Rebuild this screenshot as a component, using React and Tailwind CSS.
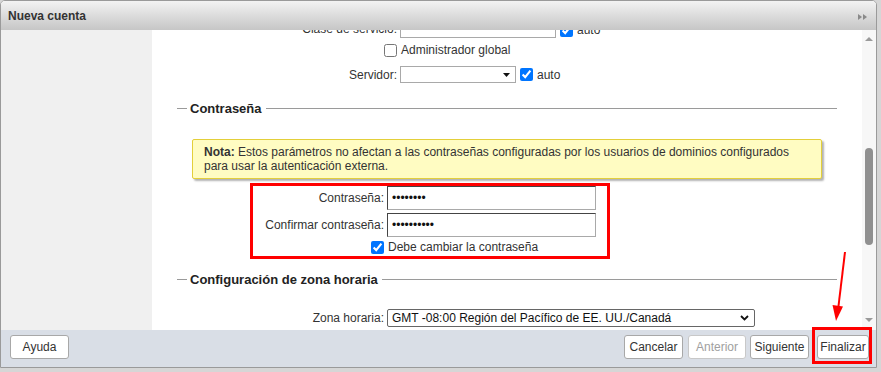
import React from 'react';

function Legend({ title }) {
    return (
        <div className="ml-[25px] flex h-[16px] w-[660px] items-center">
            <div className="h-px w-[10px] bg-[#9a9a9a]" />
            <span className="ml-[3px] mr-[4px] text-[13px] font-bold leading-none text-[#222]">{title}</span>
            <div className="h-px flex-1 bg-[#9a9a9a]" />
        </div>
    );
}

function Check({ checked }) {
    return (
        <input
            type="checkbox"
            defaultChecked={checked}
            className="m-0 h-[13px] w-[13px] shrink-0"
        />
    );
}

function Btn({ children, disabled, className = '' }) {
    return (
        <button
            className={`flex h-[24px] items-center justify-center rounded-[3px] border bg-white text-[12px] ${disabled ? 'border-[#c8c8c8] text-[#a0a0a0]' : 'border-[#a8a8a8] text-[#333]'} ${className}`}
        >
            {children}
        </button>
    );
}

export default function App() {
    return (
        <div className="relative h-[372px] w-[881px] overflow-hidden bg-[#d6d6d6] font-['Liberation_Sans',Arial,sans-serif] text-[12px] text-[#333]">
            <div className="flex h-[368px] w-[877px] flex-col overflow-hidden rounded-t-[5px] border border-[#9a9a9a] bg-white">
                {/* title bar */}
                <div className="flex h-[29px] shrink-0 items-center justify-between bg-gradient-to-b from-[#f3f3f3] to-[#c6c6c6] pl-[7px] pr-[9px]">
                    <span className="text-[12px] font-bold text-[#333]">Nueva cuenta</span>
                    <svg width="9" height="6" viewBox="0 0 9 6" className="mt-[3px]">
                        <polygon points="0,0 4,3 0,6" fill="#8a8a8a" />
                        <polygon points="5,0 9,3 5,6" fill="#8a8a8a" />
                    </svg>
                </div>

                {/* body */}
                <div className="flex h-[300px] shrink-0">
                    <div className="w-[151px] shrink-0 bg-[#f0f0f0]" />

                    <div className="w-[710px] shrink-0 overflow-hidden bg-white">
                        <div className="mt-[-11px]">
                            <div className="flex h-[19px] items-start">
                                <div className="w-[245px] pt-[4px] text-right leading-none">Clase de servicio:</div>
                                <div className="ml-[3px] h-[19px] w-[156px] border border-[#a9a9a9] bg-white" />
                                <div className="ml-[4px] flex items-center gap-[4px] pt-[2px]">
                                    <Check checked />
                                    <span>auto</span>
                                </div>
                            </div>
                            <div className="mt-[2px] flex h-[20px] items-center">
                                <div className="flex w-[245px] justify-end">
                                    <Check />
                                </div>
                                <span className="ml-[4px]">Administrador global</span>
                            </div>
                            <div className="mt-[6px] flex h-[17px] items-center">
                                <div className="w-[245px] text-right">Servidor:</div>
                                <div className="ml-[3px] flex h-[17px] w-[116px] items-center justify-end border border-[#a9a9a9] bg-white pr-[5px]">
                                    <svg width="7" height="4" viewBox="0 0 7 4">
                                        <polygon points="0,0 7,0 3.5,4" fill="#111" />
                                    </svg>
                                </div>
                                <div className="ml-[4px] flex items-center gap-[4px]">
                                    <Check checked />
                                    <span>auto</span>
                                </div>
                            </div>

                            <div className="mt-[17px]">
                                <Legend title="Contraseña" />
                            </div>

                            <div className="ml-[40px] mt-[23px] h-[40px] w-[630px] rounded-[2px] border border-[#e3cf3a] bg-[#fffcc2] px-[11px] pt-[5px] leading-[14px] shadow-[2px_2px_2px_rgba(0,0,0,0.3)]">
                                <span className="font-bold">Nota:</span> Estos parámetros no afectan a las contraseñas configuradas por los usuarios de dominios configurados para usar la autenticación externa.
                            </div>

                            <div className="ml-[98px] mt-[4px] h-[76px] w-[360px] border-[3px] border-[#f00]">
                                <div className="flex h-[24px] items-center">
                                    <div className="w-[131px] text-right">Contraseña:</div>
                                    <div className="ml-[3px] flex h-[24px] w-[209px] items-center border border-[#a9a9a9] border-l-[#444] border-t-[#444] pl-[4px] text-[12px] leading-none text-[#111]">
                                        ••••••••
                                    </div>
                                </div>
                                <div className="mt-[3px] flex h-[24px] items-center">
                                    <div className="w-[131px] text-right">Confirmar contraseña:</div>
                                    <div className="ml-[3px] flex h-[24px] w-[209px] items-center border border-[#a9a9a9] border-l-[#444] border-t-[#444] pl-[4px] text-[12px] leading-none text-[#111]">
                                        ••••••••••
                                    </div>
                                </div>
                                <div className="mt-[1px] flex h-[18px] items-center">
                                    <div className="flex w-[131px] justify-end">
                                        <Check checked />
                                    </div>
                                    <span className="ml-[4px]">Debe cambiar la contraseña</span>
                                </div>
                            </div>

                            <div className="mt-[12px]">
                                <Legend title="Configuración de zona horaria" />
                            </div>

                            <div className="mt-[22px] flex h-[18px] items-center">
                                <div className="w-[232px] text-right">Zona horaria:</div>
                                <div className="ml-[3px] flex h-[18px] w-[368px] items-center justify-between rounded-[2px] border border-[#666] bg-white pl-[4px] pr-[5px] text-[#111]">
                                    <span>GMT -08:00 Región del Pacífico de EE. UU./Canadá</span>
                                    <svg width="9" height="6" viewBox="0 0 9 6">
                                        <polyline points="1,1 4.5,4.5 8,1" fill="none" stroke="#111" strokeWidth="1.8" />
                                    </svg>
                                </div>
                            </div>
                        </div>
                    </div>

                    {/* scrollbar */}
                    <div className="flex w-[14px] shrink-0 flex-col items-center bg-[#f7f7f7]">
                        <svg width="8" height="4" viewBox="0 0 8 4" className="mt-[7px]">
                            <polygon points="0,4 8,4 4,0" fill="#9a9a9a" />
                        </svg>
                        <div className="mt-[107px] h-[97px] w-[8px] rounded-full bg-[#909090]" />
                        <svg width="8" height="4" viewBox="0 0 8 4" className="mt-[73px]">
                            <polygon points="0,0 8,0 4,4" fill="#9a9a9a" />
                        </svg>
                    </div>
                </div>

                {/* footer */}
                <div className="flex h-[37px] shrink-0 items-start bg-[#d9dee6] pl-[9px] pr-[7px] pt-[5px]">
                    <Btn className="w-[59px]">Ayuda</Btn>
                    <div className="ml-auto flex">
                        <Btn className="w-[59px]">Cancelar</Btn>
                        <Btn disabled className="ml-[5px] w-[58px]">Anterior</Btn>
                        <Btn className="ml-[4px] w-[59px]">Siguiente</Btn>
                        <Btn className="ml-[8px] w-[52px]">Finalizar</Btn>
                    </div>
                </div>
            </div>

            {/* annotations */}
            <div className="pointer-events-none absolute left-[812px] top-[327px] h-[37px] w-[60px] border-[3px] border-[#f00]" />
            <svg className="pointer-events-none absolute left-0 top-0" width="881" height="372">
                <line x1="845" y1="252" x2="838.5" y2="306" stroke="#f00" strokeWidth="2" />
                <polygon points="836,321 832.5,305 843,306.5" fill="#f00" />
            </svg>
        </div>
    );
}
